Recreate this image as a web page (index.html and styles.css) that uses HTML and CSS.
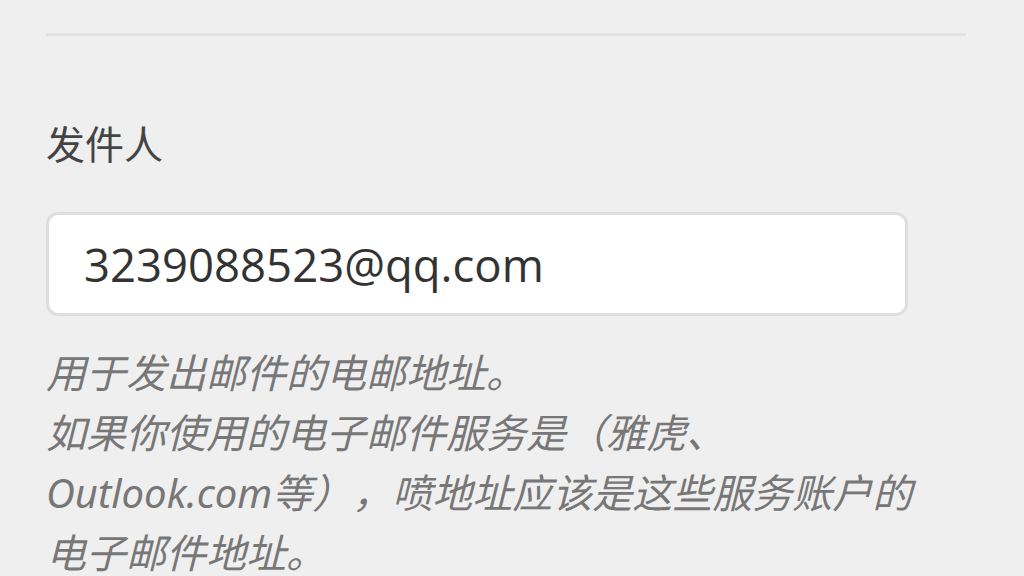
FILE: index.html
```html
<!DOCTYPE html>
<html>
<head>
  <meta charset="utf-8">
  <title>发件人设置</title>
  <link rel="stylesheet" href="styles.css">
</head>
<body>
  <div class="settings">
    <div class="divider"></div>

    <div class="field">
      <label class="field-label" for="sender">发件人</label>
      <input class="field-input" id="sender" type="text" value="3239088523@qq.com">
      <p class="field-help">用于发出邮件的电邮地址。<br>如果你使用的电子邮件服务是（雅虎、Outlook.com等），喷地址应该是这些服务账户的电子邮件地址。</p>
    </div>
  </div>
</body>
</html>
```

FILE: styles.css
```css
/* Page */
body {
  margin: 0;
  background-color: #efefef;
  font-family: "Open Sans", "Noto Sans CJK SC", sans-serif;
  color: #444;
}

.settings {
  padding: 0 58px 0 46px;
}

/* Divider line at the top */
.divider {
  height: 3px;
  margin-top: 33px;
  background-color: #e2e2e2;
}

/* Sender field */
.field {
  padding-top: 78px;
}

.field-label {
  display: block;
  font-family: "Noto Sans CJK SC", sans-serif;
  font-size: 39px;
  line-height: 56px;
  color: #444;
}

.field-input {
  display: block;
  box-sizing: border-box;
  width: 862px;
  height: 104px;
  margin-top: 42px;
  padding: 0 35px;
  border: 3px solid #dedede;
  border-radius: 12px;
  background-color: #fff;
  font-family: "Open Sans", sans-serif;
  font-size: 45.5px;
  color: #333;
  outline: none;
}

.field-help {
  max-width: 900px;
  margin: 27px 0 0;
  font-family: "Noto Sans", "Noto Sans CJK SC", sans-serif;
  font-style: italic;
  font-size: 40px;
  line-height: 60px;
  color: #777;
  text-spacing-trim: space-all;
}
```
